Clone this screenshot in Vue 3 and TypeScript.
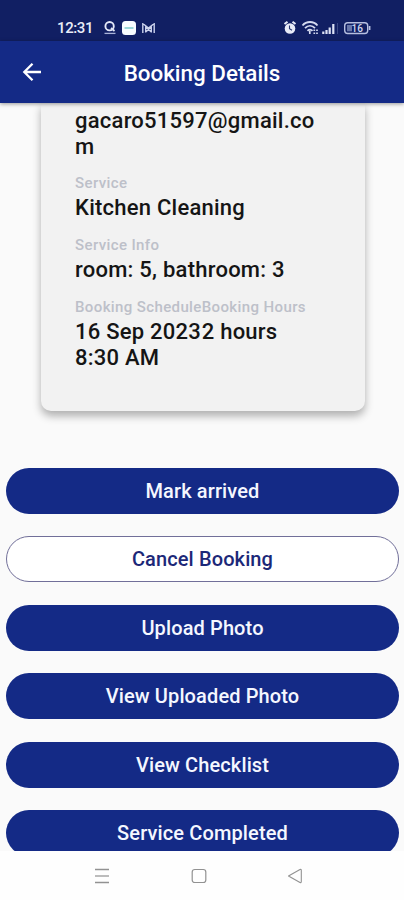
<script setup lang="ts">
interface Action {
  label: string
  outlined?: boolean
}

const actions: Action[] = [
  { label: 'Mark arrived' },
  { label: 'Cancel Booking', outlined: true },
  { label: 'Upload Photo' },
  { label: 'View Uploaded Photo' },
  { label: 'View Checklist' },
  { label: 'Service Completed' },
]
</script>

<template>
  <div class="screen">
    <div class="status">
      <span class="clock">12:31</span>
      <svg class="notifications" width="54" height="16" viewBox="0 0 54 16" fill="none">
        <circle cx="6.600" cy="6.200" r="4.200" stroke="#e4e8f7" stroke-width="1.900" />
        <path d="M8 8l3.500 3" stroke="#e4e8f7" stroke-width="1.700" />
        <path d="M1.500 13.400h11" stroke="#a9b2d8" stroke-width="1.300" />
        <rect x="19" y="1" width="14" height="14" rx="3.500" fill="#f8fcff" />
        <path d="M21.500 8h9" stroke="#83cfd0" stroke-width="1.600" />
        <path d="M39.800 3v10M51.200 3v10M39.800 3.500l5.700 4.500 5.700-4.500M42.700 12.500V6.500M48.300 12.500V6.500M42.700 12l5.600-5M48.300 12l-5.600-5" stroke="#cbd2ed" stroke-width="1.400" />
      </svg>
      <svg class="indicators" width="90" height="16" viewBox="0 0 90 16" fill="none">
        <circle cx="8" cy="8.500" r="5.300" fill="#e8ebf8" />
        <path d="M2.500 4l3-2.300M13.500 4l-3-2.300" stroke="#e8ebf8" stroke-width="2" />
        <path d="M7.500 5.500v3.200l2.500 1.500" stroke="#26356f" stroke-width="1.100" />
        <path d="M20.500 5.500c4-4.600 11-4.600 15 0M23 8.100c3-3 7-3 10 0M25.500 10.800c1.600-1.600 3.500-1.600 5 0" stroke="#d4daf0" stroke-width="1.900" />
        <path d="M27.800 10.500v3.500M32.300 9.500v1.500M35 9.500v1.500M32.300 12.500V14M35 12.500V14" stroke="#d4daf0" stroke-width="1.700" />
        <path d="M41.300 14v-2.500M44.500 14v-4M47.700 14V7.500M51.300 14V4" stroke="#dce1f4" stroke-width="2.200" />
        <path d="M55.500 3v11" stroke="#3a4885" stroke-width="1" />
        <rect x="62.700" y="2.700" width="23" height="10.800" rx="3" stroke="#b7bfe0" stroke-width="1.400" />
        <path d="M87.600 6v4" stroke="#b7bfe0" stroke-width="1.700" />
        <rect x="65" y="5" width="5" height="6.300" fill="#6876a9" />
        <text x="69.500" y="11.900" fill="#d4daf0" font-family="Roboto, sans-serif" font-size="10" font-weight="500">16</text>
      </svg>
    </div>

    <header class="appbar">
      <svg class="back" width="20" height="20" viewBox="0 0 20 20" fill="none" stroke="#fff" stroke-width="2.300">
        <path d="M19 10H2.500M10.500 1.800L2.300 10l8.200 8.200" />
      </svg>
      <h1>Booking Details</h1>
    </header>

    <main>
      <section class="card">
        <div class="field">
          <div class="value">gacaro51597@gmail.co<br />m</div>
        </div>
        <div class="field">
          <div class="label">Service</div>
          <div class="value">Kitchen Cleaning</div>
        </div>
        <div class="field">
          <div class="label">Service Info</div>
          <div class="value">room: 5, bathroom: 3</div>
        </div>
        <div class="pair">
          <div class="field">
            <div class="label">Booking Schedule</div>
            <div class="value">16 Sep 2023<br />8:30 AM</div>
          </div>
          <div class="field">
            <div class="label">Booking Hours</div>
            <div class="value">2 hours</div>
          </div>
        </div>
      </section>

      <div class="actions">
        <button v-for="a in actions" :key="a.label" type="button" :class="{ outlined: a.outlined }">
          {{ a.label }}
        </button>
      </div>
    </main>

    <nav>
      <svg width="16" height="16" viewBox="0 0 16 16" fill="none" stroke="#929292" stroke-width="1.300">
        <path d="M1 1.500h14M1 14.500h14" />
        <path d="M1 8h14" stroke="#b5b5b5" stroke-width="1.800" />
      </svg>
      <svg width="16" height="16" viewBox="0 0 16 16" fill="none" stroke="#929292" stroke-width="1.200">
        <rect x="1.200" y="1.500" width="13.600" height="13" rx="2.500" />
      </svg>
      <svg width="16" height="16" viewBox="0 0 16 16" fill="none" stroke="#929292" stroke-width="1.100">
        <path d="M1.500 8L13 1.500q1.300-.5 1.300 1v11q0 1.500-1.300 1z" stroke-linejoin="round" />
      </svg>
    </nav>
  </div>
</template>

<style>
body {
  margin: 0;
}
</style>

<style scoped>
.screen {
  width: 404px;
  height: 900px;
  display: flex;
  flex-direction: column;
  overflow: hidden;
  background: #fafafa;
  font-family: Roboto, sans-serif;
}
.status {
  height: 41px;
  flex: none;
  box-sizing: border-box;
  padding: 20px 32px 0 57px;
  display: flex;
  align-items: flex-start;
  background: #111f63;
}
.clock {
  width: 46px;
  font-size: 15px;
  line-height: 16px;
  font-weight: 500;
  letter-spacing: -0.4px;
  color: #e9ecf8;
}
.indicators {
  margin-left: auto;
}
.appbar {
  height: 62px;
  flex: none;
  position: relative;
  z-index: 1;
  display: grid;
  grid-template-columns: 22px 1fr 22px;
  align-items: center;
  padding: 0 22px;
  box-sizing: border-box;
  background: #142a86;
  box-shadow: 0 1px 4px rgba(0, 0, 0, 0.4);
}
h1 {
  margin: 1px 0 0;
  text-align: center;
  font-size: 22.4px;
  line-height: 28px;
  font-weight: 500;
  color: #fff;
}
main {
  flex: 1;
  min-height: 0;
  overflow: hidden;
}
.card {
  height: 308px;
  margin: 0 39px 0 41px;
  padding: 4.5px 34px 0;
  box-sizing: border-box;
  border-radius: 0 0 10px 10px;
  background: #f2f2f2;
  box-shadow: 0 5px 9px rgba(0, 0, 0, 0.3);
}
.field {
  margin-bottom: 13.8px;
  white-space: nowrap;
}
.pair {
  display: flex;
}
.label {
  height: 22px;
  line-height: 20px;
  font-size: 15px;
  font-weight: 500;
  letter-spacing: 0.38px;
  color: #bdc0c9;
}
.value {
  font-size: 22px;
  line-height: 26px;
  font-weight: 500;
  letter-spacing: 0.24px;
  color: #151515;
}
.actions {
  display: flex;
  flex-direction: column;
  gap: 22.6px;
  padding: 56.5px 5px 0 6px;
}
button {
  height: 46px;
  flex: none;
  padding: 0;
  border: 0;
  border-radius: 23px;
  background: #142a86;
  color: #f5f7ff;
  font: 500 20px/46px Roboto, sans-serif;
  letter-spacing: 0.12px;
}
button.outlined {
  border: 1px solid #716f99;
  background: #fff;
  color: #1c2878;
  line-height: 44px;
}
nav {
  height: 49px;
  flex: none;
  display: flex;
  justify-content: space-between;
  align-items: center;
  box-sizing: border-box;
  padding: 0 101px 0 94px;
  background: #fefefe;
}
</style>
